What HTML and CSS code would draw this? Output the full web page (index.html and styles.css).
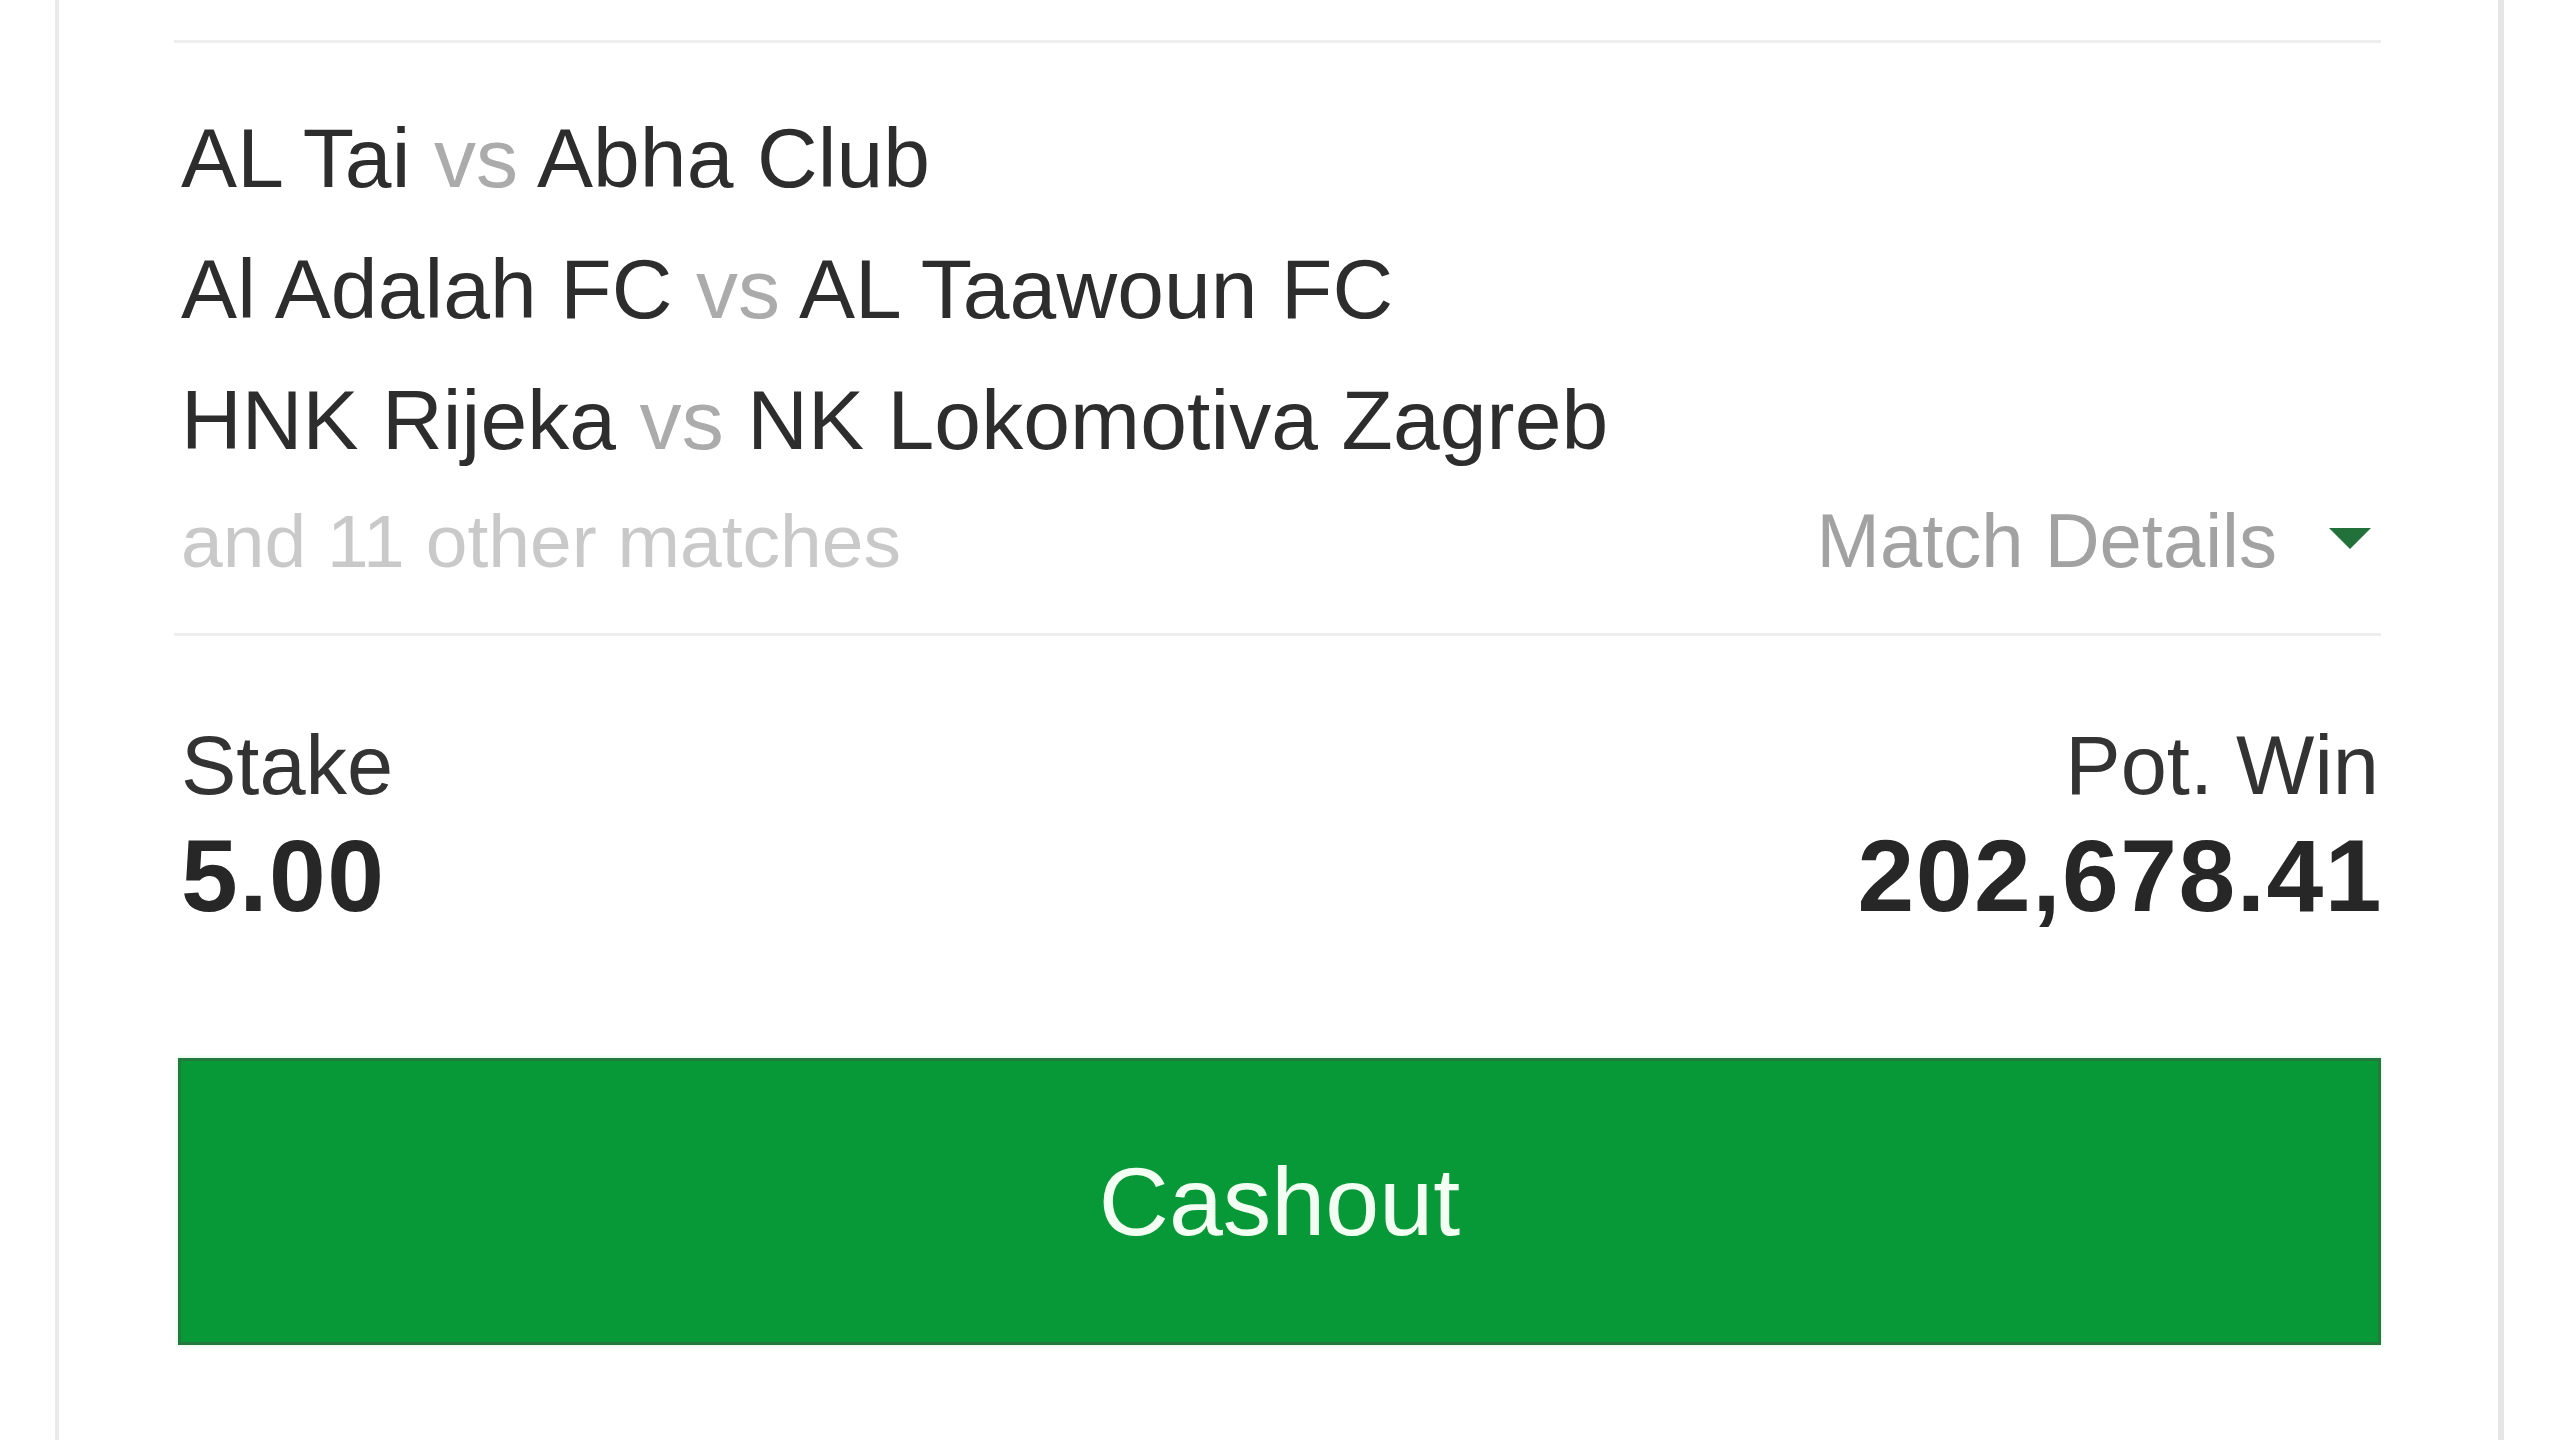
FILE: index.html
```html
<!DOCTYPE html>
<html lang="en">
<head>
<meta charset="utf-8">
<title>Bet ticket</title>
<link rel="stylesheet" href="styles.css">
</head>
<body>
<div class="card">
  <div class="divider top"></div>
  <div class="matches">
    <div class="match">AL Tai <span class="vs">vs</span> Abha Club</div>
    <div class="match">Al Adalah FC <span class="vs">vs</span> AL Taawoun FC</div>
    <div class="match">HNK Rijeka <span class="vs">vs</span> NK Lokomotiva Zagreb</div>
  </div>
  <div class="others">
    <span class="others-text">and 11 other matches</span>
    <span class="details">Match Details <span class="caret"></span></span>
  </div>
  <div class="divider mid"></div>
  <div class="amounts">
    <div class="amount">
      <div class="label">Stake</div>
      <div class="value">5.00</div>
    </div>
    <div class="amount right">
      <div class="label">Pot. Win</div>
      <div class="value">202,678.41</div>
    </div>
  </div>
  <div class="cashout">Cashout</div>
</div>
</body>
</html>
```

FILE: styles.css
```css
html, body {
  margin: 0;
  padding: 0;
  background: #ffffff;
}

body {
  font-family: "Liberation Sans", Arial, sans-serif;
  color: #2d2d2d;
}

.card {
  margin-left: 55px;
  width: 2201px;
  height: 1440px;
  padding: 38px 117px 0 121px;
  box-sizing: content-box;
  border-left: 4px solid #ebebeb;
  border-right: 6px solid #e6e6e6;
  background: #ffffff;
}

.divider {
  height: 3px;
  background: #eeeeee;
  margin-left: -6px;
}

.divider.top {
  margin-top: 2px;
}

.matches {
  margin-top: 50px;
  padding-left: 1px;
}

.match {
  font-size: 84px;
  line-height: 131px;
  letter-spacing: 0.1px;
  color: #2d2d2d;
  white-space: nowrap;
}

.vs {
  color: #ababab;
}

.others {
  margin-top: 5px;
  padding-left: 1px;
  display: flex;
  justify-content: space-between;
  align-items: baseline;
  font-size: 75px;
  line-height: 100px;
}

.others-text {
  color: #c9c9c9;
}

.details {
  display: flex;
  align-items: center;
  color: #a2a2a2;
  font-size: 76px;
  margin-right: 10px;
}

.caret {
  display: inline-block;
  width: 0;
  height: 0;
  margin-left: 52px;
  border-left: 21px solid transparent;
  border-right: 21px solid transparent;
  border-top: 21px solid #22703a;
  position: relative;
  top: -3px;
}

.divider.mid {
  margin-top: 42px;
}

.amounts {
  margin-top: 80px;
  padding-left: 1px;
  display: flex;
  justify-content: space-between;
}

.amount.right {
  text-align: right;
  margin-right: 2px;
}

.label {
  font-size: 83px;
  line-height: 100px;
  color: #333333;
}

.value {
  margin-top: 5px;
  font-size: 102px;
  line-height: 110px;
  font-weight: bold;
  letter-spacing: 1.5px;
  color: #272727;
}

.amount.right .value {
  margin-right: -4px;
}

.cashout {
  margin-top: 127px;
  margin-left: -2px;
  height: 281px;
  display: flex;
  align-items: center;
  justify-content: center;
  background: #079837;
  border: 3px solid #24793f;
  box-shadow: 0 0 4px #c8f5d0;
  color: #f2fff2;
  font-size: 97px;
}
```
